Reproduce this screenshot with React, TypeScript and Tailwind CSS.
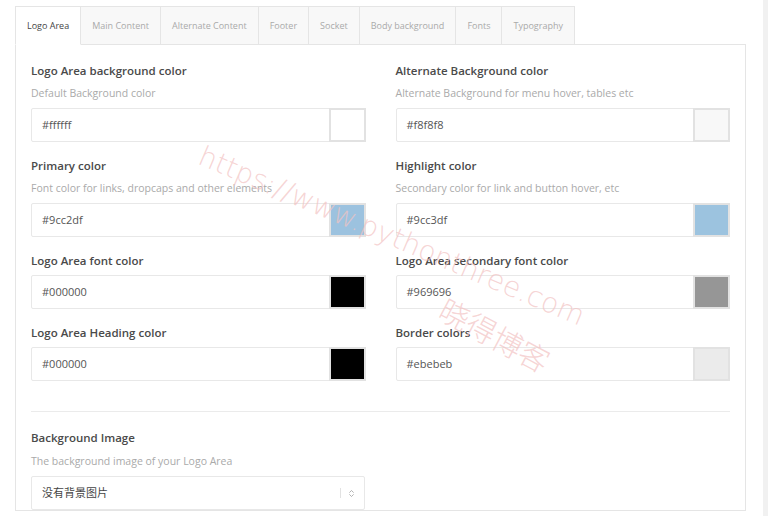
import { ChevronsUpDown } from "lucide-react";

const tabs = [
    "Logo Area",
    "Main Content",
    "Alternate Content",
    "Footer",
    "Socket",
    "Body background",
    "Fonts",
    "Typography",
];

type Field = {
    label: string;
    desc?: string;
    value: string;
    color: string;
};

const rows: [Field, Field][] = [
    [
        { label: "Logo Area background color", desc: "Default Background color", value: "#ffffff", color: "#ffffff" },
        { label: "Alternate Background color", desc: "Alternate Background for menu hover, tables etc", value: "#f8f8f8", color: "#f8f8f8" },
    ],
    [
        { label: "Primary color", desc: "Font color for links, dropcaps and other elements", value: "#9cc2df", color: "#9cc2df" },
        { label: "Highlight color", desc: "Secondary color for link and button hover, etc", value: "#9cc3df", color: "#9cc3df" },
    ],
    [
        { label: "Logo Area font color", value: "#000000", color: "#000000" },
        { label: "Logo Area secondary font color", value: "#969696", color: "#969696" },
    ],
    [
        { label: "Logo Area Heading color", value: "#000000", color: "#000000" },
        { label: "Border colors", value: "#ebebeb", color: "#ebebeb" },
    ],
];

function ColorField({ field }: { field: Field }) {
    return (
        <div className="flex flex-col mb-[15px]">
            <label className="text-[11.5px] leading-[18px] font-semibold text-[#4a4a4a] mb-[5px]">
                {field.label}
            </label>
            {field.desc && (
                <p className="text-[10.5px] leading-[16px] text-[#aaaaaa] mb-[7px]">{field.desc}</p>
            )}
            <div className="flex h-[34px] border border-[#e8e8e8] rounded-[2px] bg-white">
                <span className="flex-1 flex items-center pl-[10px] text-[11px] text-[#555]">
                    {field.value}
                </span>
                <span
                    className="w-[37px] border-2 border-[#e2e2e2] -my-px -mr-px"
                    style={{ backgroundColor: field.color }}
                />
            </div>
        </div>
    );
}

export default function App() {
    return (
        <div
            className="relative h-[516px] w-full overflow-hidden bg-white flex"
            style={{ fontFamily: '"Open Sans", "Noto Sans CJK SC", sans-serif' }}
        >
            <div className="flex-1 pl-[15px] pr-[2px] pt-[6px]">
                {/* Tabs */}
                <div className="flex h-[39px]">
                    {tabs.map((tab, i) => (
                        <div
                            key={tab}
                            className={`
                                flex items-center px-[11px] text-[9px] border border-[#e5e5e5]
                                ${i > 0 ? "-ml-px" : ""}
                                ${i === 0
                                    ? "bg-white text-[#444] border-b-white relative z-10"
                                    : "bg-[#f8f8f8] text-[#aaaaaa]"}
                            `}
                        >
                            {tab}
                        </div>
                    ))}
                </div>

                {/* Panel */}
                <div className="-mt-px border border-[#e5e5e5] px-[15px] pt-[17px] w-[731px]">
                    {rows.map((row, i) => (
                        <div key={i} className="grid grid-cols-2 gap-x-[30px]">
                            <ColorField field={row[0]} />
                            <ColorField field={row[1]} />
                        </div>
                    ))}

                    <div className="border-t border-[#ebebeb] mt-[15px] pt-[17px]">
                        <div className="w-[334px] flex flex-col">
                            <label className="text-[11.5px] leading-[18px] font-semibold text-[#4a4a4a] mb-[6px]">
                                Background Image
                            </label>
                            <p className="text-[10.5px] leading-[16px] text-[#aaaaaa] mb-[7px]">
                                The background image of your Logo Area
                            </p>
                            <div className="flex items-center h-[34px] border border-[#e8e8e8] rounded-[2px] pl-[10px] pr-[8px]">
                                <span className="flex-1 text-[11px] text-[#444]">没有背景图片</span>
                                <span className="h-[10px] border-l border-[#e2e2e2] mr-[6px]" />
                                <ChevronsUpDown size={9} className="text-[#999]" strokeWidth={2} />
                            </div>
                        </div>
                    </div>
                </div>
            </div>

            {/* scrollbar strip */}
            <div className="w-[5px] bg-[#f1f1f1]" />

            {/* watermark */}
            <div className="pointer-events-none absolute inset-0">
                <span
                    className="absolute left-[200px] top-[134px] text-[28px] text-[#f2c2c2]/70 whitespace-nowrap origin-left"
                    style={{ transform: "rotate(23deg)", fontFamily: '"DejaVu Sans", sans-serif', fontWeight: 200 }}
                >
                    https://www.pythonthree.com
                </span>
                <span
                    className="absolute left-[442px] top-[284px] text-[30px] text-[#f2c2c2]/70 whitespace-nowrap origin-left"
                    style={{ transform: "rotate(28deg)", fontFamily: '"Noto Sans CJK SC", sans-serif', fontWeight: 300 }}
                >
                    晓得博客
                </span>
            </div>
        </div>
    );
}
